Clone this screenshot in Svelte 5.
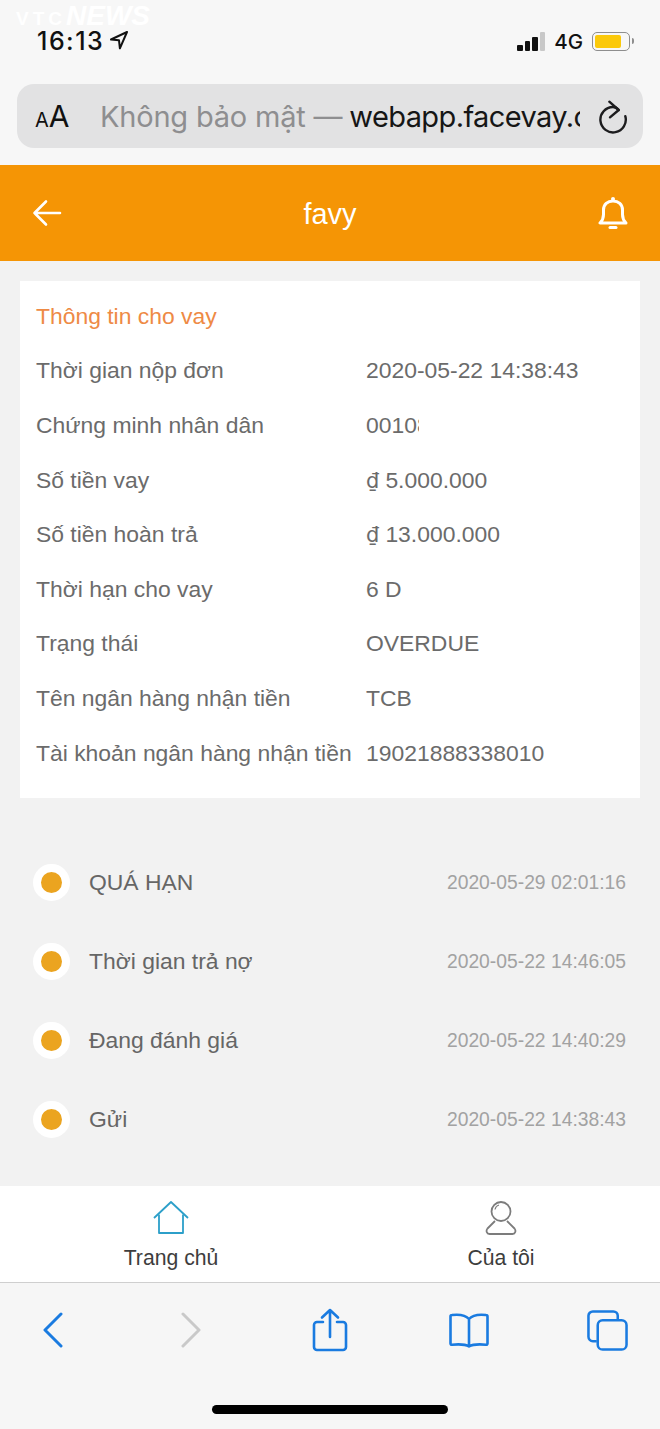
<script>
  const loanRows = [
    { label: 'Thời gian nộp đơn', value: '2020-05-22 14:38:43' },
    { label: 'Chứng minh nhân dân', value: '001085', clipped: true },
    { label: 'Số tiền vay', value: '5.000.000', money: true },
    { label: 'Số tiền hoàn trả', value: '13.000.000', money: true },
    { label: 'Thời hạn cho vay', value: '6 D' },
    { label: 'Trạng thái', value: 'OVERDUE' },
    { label: 'Tên ngân hàng nhận tiền', value: 'TCB' },
    { label: 'Tài khoản ngân hàng nhận tiền', value: '19021888338010' }
  ];

  const timeline = [
    { name: 'QUÁ HẠN', time: '2020-05-29 02:01:16' },
    { name: 'Thời gian trả nợ', time: '2020-05-22 14:46:05' },
    { name: 'Đang đánh giá', time: '2020-05-22 14:40:29' },
    { name: 'Gửi', time: '2020-05-22 14:38:43' }
  ];
</script>

<div class="phone">
  <div class="browser-top">
    <span class="watermark"><span class="wm-vtc">VTC</span><span class="wm-news">NEWS</span></span>
    <div class="status-bar">
      <div class="clock">
        <span>16:13</span>
        <svg width="20" height="20" viewBox="0 0 20 20" fill="none" stroke="#111" stroke-width="2" stroke-linejoin="round">
          <path d="M18 2 2 9.500l8 .8.900 8z" />
        </svg>
      </div>
      <div class="status-right">
        <div class="signal">
          <i style="height: 6px"></i>
          <i style="height: 10px"></i>
          <i style="height: 14px"></i>
          <i class="off" style="height: 19px"></i>
        </div>
        <span class="net">4G</span>
        <div class="battery"><div class="battery-fill"></div></div>
        <div class="battery-cap"></div>
      </div>
    </div>
    <div class="url-bar">
      <span class="aa"><small>A</small>A</span>
      <div class="url-text">
        <span class="url-muted">Không bảo mật —</span><span class="url-host">webapp.facevay.com</span>
      </div>
      <svg class="reload" width="30" height="36" viewBox="0 0 30 36" fill="none" stroke="#1c1c1e" stroke-width="2.400" stroke-linecap="round" stroke-linejoin="round">
        <path d="M20.700 12C19 10 17 9 15 9A12.700 12.700 0 1 0 27.300 18.200" />
        <path d="M11.300 3.700 20.700 12 12 19.300" />
      </svg>
    </div>
  </div>

  <header class="app-header">
    <svg width="30" height="30" viewBox="0 0 30 30" fill="none" stroke="#fff" stroke-width="2.600" stroke-linecap="round" stroke-linejoin="round">
      <path d="M28 15H2.500M14 3.500 2.500 15 14 26.500" />
    </svg>
    <span class="app-title">favy</span>
    <svg width="30" height="36" viewBox="0 0 30 36" fill="none" stroke="#fff" stroke-width="3" stroke-linejoin="round">
      <path d="M2 28h26c-2.500-2.500-3.500-5-3.500-8.500V15C24.500 9.500 20.500 6 15 6S5.500 9.500 5.500 15v4.500C5.500 23 4.500 25.500 2 28z" />
      <circle cx="15" cy="4" r="2" fill="#fff" stroke="none" />
      <path d="M12 32.500h6" stroke-linecap="round" />
    </svg>
  </header>

  <main class="content">
    <section class="card">
      <h2>Thông tin cho vay</h2>
      {#each loanRows as row}
        <div class="row">
          <span class="row-label">{row.label}</span>
          <span class="row-value" class:clipped={row.clipped}>
            {#if row.money}<span class="dong">₫</span>{/if}{row.value}
          </span>
        </div>
      {/each}
    </section>

    <ul class="timeline">
      {#each timeline as item}
        <li>
          <span class="dot"></span>
          <span class="step-name">{item.name}</span>
          <span class="step-time">{item.time}</span>
        </li>
      {/each}
    </ul>
  </main>

  <nav class="tabs">
    <div class="tab">
      <svg width="38" height="36" viewBox="0 0 38 36" fill="none" stroke="#2c9fc9" stroke-width="1.800" stroke-linejoin="round">
        <path d="M2 18 19 2l17 16" />
        <path d="M7 14.500V33h24V14.500" />
      </svg>
      <span>Trang chủ</span>
    </div>
    <div class="tab">
      <svg width="34" height="36" viewBox="0 0 34 36" fill="none" stroke="#7c7c7c" stroke-width="1.800">
        <circle cx="17" cy="11.500" r="9.500" />
        <path d="M11 9.500c.5-2.500 2-4 4-4.500" stroke-width="1.200" />
        <path d="M11 21 3.500 28.500C1.800 30.500 2.500 34 5.500 34h23c3 0 3.700-3.500 2-5.500L23 21" stroke-linejoin="round" />
      </svg>
      <span>Của tôi</span>
    </div>
  </nav>

  <footer class="browser-bottom">
    <div class="toolbar">
      <svg class="t-back" width="22" height="36" viewBox="0 0 22 36" fill="none" stroke="#1a7be0" stroke-width="3" stroke-linecap="round" stroke-linejoin="round">
        <path d="M19 2 3 18l16 16" />
      </svg>
      <svg class="t-forward" width="22" height="36" viewBox="0 0 22 36" fill="none" stroke="#c9c9c9" stroke-width="3" stroke-linecap="round" stroke-linejoin="round">
        <path d="M3 2l16 16L3 34" />
      </svg>
      <svg class="t-share" width="36" height="44" viewBox="0 0 36 44" fill="none" stroke="#1a7be0" stroke-width="2.600" stroke-linecap="round" stroke-linejoin="round">
        <path d="M11 14H5a3 3 0 0 0-3 3v22a3 3 0 0 0 3 3h26a3 3 0 0 0 3-3V17a3 3 0 0 0-3-3h-6" />
        <path d="M18 29V2M10 9.500 18 2l8 7.500" />
      </svg>
      <svg class="t-book" width="40" height="36" viewBox="0 0 40 36" fill="none" stroke="#1a7be0" stroke-width="2.600" stroke-linejoin="round">
        <path d="M20 7C17 3.500 12 2 3 3 2 3 1.500 3.500 1.500 4.500v27c0 .8.500 1.300 1.500 1.200C10 32 16 32 20 34.500c4-2.500 10-2.500 17-1.800 1 .1 1.500-.4 1.500-1.200v-27C38.500 3.500 38 3 37 3 28 2 23 3.500 20 7zM20 7v27" />
      </svg>
      <svg class="t-tabs" width="41" height="41" viewBox="0 0 42 42" fill="none" stroke="#1a7be0" stroke-width="2.600">
        <path d="M10 32H6a4.500 4.500 0 0 1-4.500-4.500V6A4.500 4.500 0 0 1 6 1.500h21A4.500 4.500 0 0 1 31.500 6v4" />
        <rect x="11" y="10.500" width="29.500" height="30" rx="5" />
      </svg>
    </div>
    <div class="home-indicator"></div>
  </footer>
</div>

<style>
  :global(body) {
    margin: 0;
    background: #f2f2f2;
  }

  .phone {
    position: relative;
    width: 660px;
    height: 1429px;
    overflow: hidden;
    display: flex;
    flex-direction: column;
    font-family: "Liberation Sans", Arial, sans-serif;
  }

  .browser-top {
    height: 165px;
    background: #f7f7f7;
    box-sizing: border-box;
    padding: 0 17px;
  }

  .watermark {
    position: absolute;
    left: 16px;
    top: 0;
    color: #fff;
    font-weight: 700;
    font-style: italic;
    line-height: 32px;
    white-space: nowrap;
  }

  .wm-vtc {
    font-size: 19px;
    font-style: normal;
    letter-spacing: 4px;
  }

  .wm-news {
    font-size: 28px;
    letter-spacing: 0;
  }

  .status-bar {
    height: 84px;
    display: flex;
    justify-content: space-between;
    box-sizing: border-box;
    padding: 25px 9px 0 20px;
  }

  .clock {
    display: flex;
    align-items: flex-start;
    gap: 5px;
    font-family: Inter, sans-serif;
    font-size: 25px;
    font-weight: 500;
    letter-spacing: 1.500px;
    line-height: 32px;
    color: #111;
  }

  .clock svg {
    margin-top: 5px;
  }

  .status-right {
    display: flex;
    align-items: center;
    height: 32px;
  }

  .signal {
    display: flex;
    align-items: flex-end;
    gap: 2px;
    margin-right: 9px;
  }

  .signal i {
    display: block;
    width: 5.500px;
    background: #111;
    border-radius: 1px;
  }

  .signal i.off {
    background: #c8c8c8;
  }

  .net {
    font-family: Inter, sans-serif;
    font-size: 20.500px;
    font-weight: 500;
    color: #111;
    margin-right: 9px;
  }

  .battery {
    width: 38px;
    height: 19px;
    box-sizing: border-box;
    border: 1.500px solid #8e8e8e;
    border-radius: 5px;
    padding: 2px;
  }

  .battery-fill {
    width: 26px;
    height: 100%;
    background: #fbc90a;
    border-radius: 2px;
  }

  .battery-cap {
    width: 2px;
    height: 6px;
    margin-left: 2px;
    background: #8e8e8e;
    border-radius: 0 2px 2px 0;
  }

  .url-bar {
    height: 64px;
    display: flex;
    align-items: center;
    background: #e2e2e3;
    border-radius: 17px;
    box-sizing: border-box;
    padding: 0 14px 0 18px;
  }

  .aa {
    width: 65px;
    flex: none;
    font-family: Inter, sans-serif;
    font-size: 30px;
    color: #111;
  }

  .aa small {
    font-size: 20px;
  }

  .url-text {
    width: 480px;
    flex: none;
    overflow: hidden;
    white-space: nowrap;
    font-family: Inter, sans-serif;
    font-size: 29px;
    letter-spacing: -0.2px;
  }

  .url-muted {
    color: #8e8e90;
  }

  .url-host {
    color: #161616;
    margin-left: 7px;
    letter-spacing: -0.6px;
  }

  .reload {
    margin-left: 18px;
    flex: none;
  }

  .app-header {
    height: 96px;
    flex: none;
    background: #f59505;
    display: flex;
    align-items: center;
    justify-content: space-between;
    box-sizing: border-box;
    padding: 0 32px;
  }

  .app-title {
    color: #fff;
    font-size: 29px;
    margin-top: 3px;
  }

  .content {
    flex: 1;
    background: #f2f2f2;
    padding: 20px 20px 0;
  }

  .card {
    background: #fff;
    height: 517px;
    box-sizing: border-box;
    padding: 8px 16px 0;
  }

  h2 {
    margin: 0;
    height: 54.600px;
    line-height: 54.600px;
    font-size: 22.900px;
    font-weight: 400;
    color: #ee8a45;
  }

  .row {
    display: flex;
    height: 54.600px;
    align-items: center;
    font-size: 22.900px;
    color: #6b6b6b;
  }

  .row-label {
    width: 330px;
    flex: none;
    white-space: nowrap;
  }

  .row-value {
    white-space: nowrap;
  }

  .dong {
    font-family: "DejaVu Sans", sans-serif;
    font-size: 21px;
    margin-right: 6px;
  }

  .clipped {
    width: 53px;
    overflow: hidden;
  }

  .timeline {
    list-style: none;
    margin: 45px 0 0;
    padding: 0 14px 0 13px;
  }

  .timeline li {
    height: 79px;
    display: flex;
    align-items: center;
  }

  .dot {
    width: 21px;
    height: 21px;
    flex: none;
    background: #eba420;
    border: 8px solid #fff;
    border-radius: 50%;
    margin-right: 19px;
  }

  .step-name {
    flex: 1;
    font-size: 22.900px;
    color: #666;
  }

  .step-time {
    font-size: 19.300px;
    color: #a2a2a2;
  }

  .tabs {
    height: 96px;
    flex: none;
    background: #fff;
    display: flex;
    border-bottom: 1px solid #cfcfcf;
  }

  .tab {
    display: flex;
    flex-direction: column;
    align-items: center;
    padding-top: 14px;
    box-sizing: border-box;
    font-size: 21.200px;
    color: #3d3d3d;
  }

  .tab:first-child {
    width: 342px;
  }

  .tab:last-child {
    width: 318px;
  }

  .tab span {
    margin-top: 10px;
  }

  .browser-bottom {
    height: 146px;
    flex: none;
    background: #f6f6f6;
    box-sizing: border-box;
  }

  .toolbar {
    display: flex;
    align-items: center;
    height: 94px;
    padding-left: 42px;
  }

  .t-back { margin-right: 116px; }
  .t-forward { margin-right: 110px; }
  .t-share { margin-right: 101px; }
  .t-book { margin-right: 98px; }

  .home-indicator {
    width: 236px;
    height: 9px;
    margin: 28px auto 0;
    background: #000;
    border-radius: 5px;
  }
</style>
